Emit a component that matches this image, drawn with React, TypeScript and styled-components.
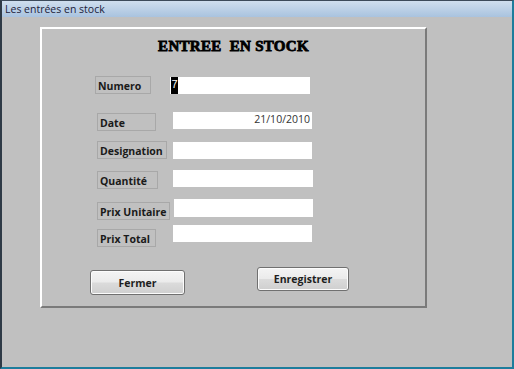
import React from "react";
import styled, { createGlobalStyle } from "styled-components";

const Global = createGlobalStyle`
  html, body { margin: 0; padding: 0; background: #c0c0c0; }
  * { box-sizing: border-box; }
`;

const Window = styled.div`
  width: 514px;
  height: 369px;
  display: flex;
  flex-direction: column;
  border-top: 1px solid #3c4a5a;
  border-left: 2px solid #2e3a46;
  border-right: 2px solid #1d7d9c;
  border-bottom: 2px solid #1d7d9c;
  background: #c0c0c0;
`;

const TitleBar = styled.div`
  height: 16px;
  flex: none;
  background: linear-gradient(#cfdeee, #a9c3df);
  font-family: "Open Sans", "DejaVu Sans", sans-serif;
  font-size: 10.5px;
  line-height: 16px;
  color: #1c1c3a;
  padding-left: 3px;
  white-space: nowrap;
`;

const Body = styled.div`
  flex: 1;
  padding: 10px 0 0 38px;
`;

const Panel = styled.div`
  width: 387px;
  height: 281px;
  border-top: 2px solid #ffffff;
  border-left: 2px solid #ffffff;
  border-right: 2px solid #7a7a7a;
  border-bottom: 2px solid #7a7a7a;
  display: flex;
  flex-direction: column;
`;

const Heading = styled.div`
  margin-top: 8px;
  height: 18px;
  text-align: center;
  font-family: "Liberation Serif", "DejaVu Serif", serif;
  font-weight: 900;
  font-size: 15px;
  line-height: 18px;
  color: #000;
  white-space: pre;
  -webkit-text-stroke: 0.8px #000;
  letter-spacing: 0.3px;
`;

const Form = styled.div`
  margin-top: 21px;
  padding-left: 53px;
  display: flex;
  flex-direction: column;
`;

const Row = styled.div<{ $h: number }>`
  height: ${(p) => p.$h}px;
  display: flex;
  align-items: flex-start;
`;

const Label = styled.div<{ $w: number; $dy: number; $dx: number }>`
  width: ${(p) => p.$w}px;
  height: 18px;
  margin-top: ${(p) => p.$dy}px;
  margin-left: ${(p) => p.$dx}px;
  border: 1px solid #a8a8a8;
  padding-left: 2px;
  font-family: "Open Sans", "Liberation Sans", sans-serif;
  font-weight: 700;
  font-size: 10.5px;
  line-height: 18px;
  color: #1a1a1a;
  white-space: nowrap;
  overflow: hidden;
`;

const Field = styled.div<{ $x: number; $w: number; $dy: number; $h: number }>`
  margin-left: ${(p) => p.$x}px;
  margin-top: ${(p) => p.$dy}px;
  width: ${(p) => p.$w}px;
  height: ${(p) => p.$h}px;
  background: #ffffff;
  font-family: "Open Sans", "Liberation Sans", sans-serif;
  font-size: 10.5px;
  line-height: 15px;
  color: #333;
  text-align: right;
  padding-right: 2px;
  display: flex;
  justify-content: flex-end;
`;

const LeftField = styled(Field)`
  justify-content: flex-start;
  padding-left: 1px;
  padding-top: 0;
`;

const Selected = styled.span`
  display: inline-block;
  background: #000;
  color: #ffffff;
  font-family: "Liberation Sans", sans-serif;
  font-size: 11px;
  line-height: 15px;
  padding: 0 0.5px;
`;

const Buttons = styled.div`
  margin-top: 20px;
  padding-left: 48px;
  display: flex;
  align-items: flex-start;
`;

const Button = styled.button<{ $w: number; $h: number; $dy: number }>`
  width: ${(p) => p.$w}px;
  height: ${(p) => p.$h}px;
  margin-top: ${(p) => p.$dy}px;
  border: 1px solid #707070;
  border-radius: 3px;
  background: linear-gradient(#f4f4f4 0%, #ebebeb 48%, #dbdbdb 52%, #cfcfcf 100%);
  box-shadow: inset 0 0 0 1px #fcfcfc;
  font-family: "Open Sans", "Liberation Sans", sans-serif;
  font-weight: 700;
  font-size: 10.5px;
  color: #1e1e1e;
  padding: 0;
  cursor: pointer;
`;

const Spacer = styled.div<{ $w: number }>`
  width: ${(p) => p.$w}px;
  flex: none;
`;

const rows = [
  { label: "Numero", lw: 56, dx: 0, ldy: 0, x: 19, w: 140, fdy: 1, fh: 17, h: 36 },
  { label: "Date", lw: 59, dx: 2, ldy: 1, x: 17, w: 139, fdy: 0, fh: 17, h: 29, value: "21/10/2010" },
  { label: "Designation", lw: 70, dx: 2, ldy: 0, x: 6, w: 139, fdy: 1, fh: 17, h: 29 },
  { label: "Quantité", lw: 61, dx: 2, ldy: 1, x: 15, w: 140, fdy: 0, fh: 17, h: 29 },
  { label: "Prix Unitaire", lw: 73, dx: 2, ldy: 3, x: 4, w: 139, fdy: 0, fh: 18, h: 26 },
  { label: "Prix Total", lw: 59, dx: 2, ldy: 4, x: 17, w: 139, fdy: 0, fh: 17, h: 22 },
];

export default function App() {
  return (
    <>
      <Global />
      <Window>
        <TitleBar>Les entrées en stock</TitleBar>
        <Body>
          <Panel>
            <Heading>{"ENTREE  EN STOCK"}</Heading>
            <Form>
              {rows.map((r, i) => (
                <Row key={r.label} $h={r.h}>
                  <Label $w={r.lw} $dx={r.dx} $dy={r.ldy}>{r.label}</Label>
                  {i === 0 ? (
                    <LeftField $x={r.x} $w={r.w} $dy={r.fdy} $h={r.fh}>
                      <Selected>7</Selected>
                    </LeftField>
                  ) : (
                    <Field $x={r.x} $w={r.w} $dy={r.fdy} $h={r.fh}>
                      {r.value ?? ""}
                    </Field>
                  )}
                </Row>
              ))}
            </Form>
            <Buttons>
              <Button $w={95} $h={25} $dy={3}>Fermer</Button>
              <Spacer $w={72} />
              <Button $w={92} $h={24} $dy={0}>Enregistrer</Button>
            </Buttons>
          </Panel>
        </Body>
      </Window>
    </>
  );
}
